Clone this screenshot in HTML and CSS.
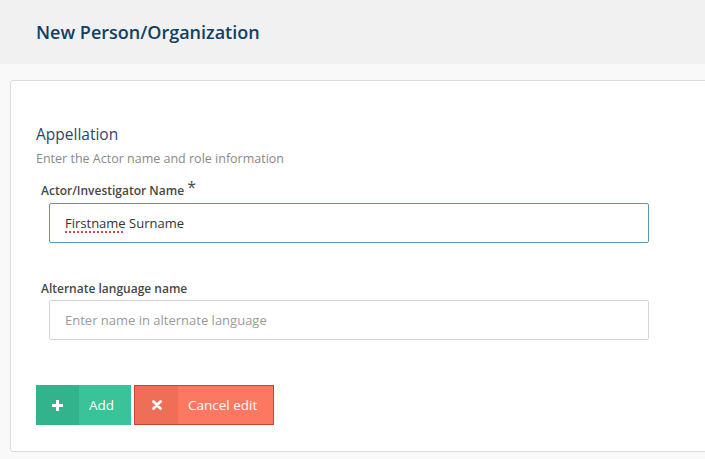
FILE: index.html
```html
<!DOCTYPE html>
<html>
<head>
<meta charset="utf-8">
<link rel="stylesheet" href="styles.css">
</head>
<body>
<header class="page-header">
  <h1 class="page-title">New Person/Organization</h1>
</header>
<main class="page-body">
  <section class="card">
    <h2 class="section-title">Appellation</h2>
    <p class="section-sub">Enter the Actor name and role information</p>
    <div class="field-group">
      <label class="field-label">Actor/Investigator Name <span class="req">*</span></label>
      <div class="field field-focus"><span class="misspelled">Firstname</span> Surname</div>
    </div>
    <div class="field-group field-group-2">
      <label class="field-label">Alternate language name</label>
      <div class="field field-placeholder">Enter name in alternate language</div>
    </div>
    <div class="actions">
      <button class="btn btn-add">
        <span class="btn-icon"><svg width="11" height="11" viewBox="0 0 11 11"><path d="M4 0h3v4h4v3H7v4H4V7H0V4h4z" fill="#fff"/></svg></span>
        <span class="btn-text">Add</span>
      </button>
      <button class="btn btn-cancel">
        <span class="btn-icon"><svg width="10" height="10" viewBox="0 0 10 10"><path d="M1.5 1.5L8.5 8.5M8.5 1.5L1.5 8.5" stroke="#fff" stroke-width="2.8" stroke-linecap="round"/></svg></span>
        <span class="btn-text">Cancel edit</span>
      </button>
    </div>
  </section>
</main>
</body>
</html>
```
FILE: styles.css
```css
html, body {
  margin: 0;
  padding: 0;
}
body {
  background: #f9f9f9;
  font-family: "Open Sans", "Liberation Sans", sans-serif;
  overflow: hidden;
}
.page-header {
  height: 64px;
  background: #f1f1f1;
  padding-left: 36px;
  display: flex;
  align-items: center;
  box-sizing: border-box;
}
.page-title {
  margin: 0;
  font-size: 18px;
  font-weight: 600;
  color: #123f63;
  line-height: 24px;
}
.page-body {
  padding: 16px 0 0 10px;
}
.card {
  background: #fff;
  border: 1px solid #dcdcdc;
  border-radius: 3px;
  margin-right: -20px;
  height: 372px;
  box-sizing: border-box;
  padding: 43px 0 0 25px;
}
.section-title {
  margin: 0;
  font-size: 15.5px;
  font-weight: 400;
  line-height: 20px;
  color: #2b4763;
}
.section-sub {
  margin: 7px 0 0;
  font-size: 12.5px;
  line-height: 16px;
  color: #8a8a8a;
}
.field-group {
  margin-top: 16px;
  padding-left: 5px;
}
.field-group-2 {
  margin-top: 38px;
}
.field-label {
  display: block;
  font-size: 12px;
  font-weight: 600;
  line-height: 16px;
  color: #474747;
}
.req {
  font-size: 16px;
  font-weight: 400;
  position: relative;
  top: -2px;
  line-height: 0;
}
.field {
  margin: 4px 0 0 8px;
  width: 600px;
  height: 40px;
  box-sizing: border-box;
  border: 1px solid #d6d6d6;
  border-radius: 2px;
  padding: 0 15px;
  display: flex;
  align-items: center;
  font-size: 13px;
  color: #333;
  white-space: pre;
}
.field-group-2 .field {
  margin-top: 3px;
}
.field-focus {
  border-color: #5b97bb;
}
.field-placeholder {
  color: #9a9a9a;
}
.misspelled {
  text-decoration: underline dotted #e0443a;
  text-decoration-thickness: 2px;
  text-underline-offset: 3px;
}
.actions {
  margin-top: 45px;
  display: flex;
  gap: 3px;
}
.btn {
  display: flex;
  height: 40px;
  padding: 0;
  border: 0;
  font-family: inherit;
  font-size: 13.5px;
  font-weight: 400;
  color: #fff;
  cursor: pointer;
  box-sizing: border-box;
}
.btn-icon {
  display: flex;
  align-items: center;
  justify-content: center;
  height: 100%;
}
.btn-text {
  display: flex;
  align-items: center;
  justify-content: flex-start;
  height: 100%;
  flex: 1;
  padding-left: 10px;
}
.btn-add {
  width: 95px;
  background: #3ac298;
}
.btn-add .btn-icon {
  width: 43px;
  background: #33b38b;
}
.btn-cancel {
  width: 140px;
  background: #fd7860;
  border: 1px solid #c9432f;
}
.btn-cancel .btn-icon {
  width: 43px;
  background: #ef6e58;
}
```
